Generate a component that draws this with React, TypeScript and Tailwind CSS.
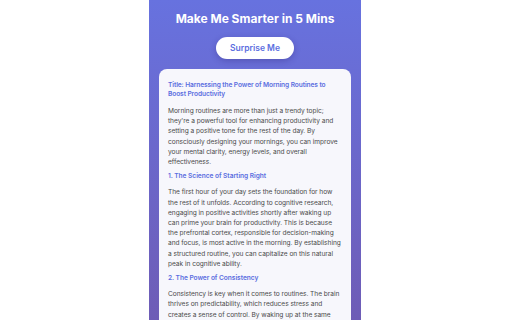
import React from "react";

const sections = [
  {
    heading: "1. The Science of Starting Right",
    body: "The first hour of your day sets the foundation for how the rest of it unfolds. According to cognitive research, engaging in positive activities shortly after waking up can prime your brain for productivity. This is because the prefrontal cortex, responsible for decision-making and focus, is most active in the morning. By establishing a structured routine, you can capitalize on this natural peak in cognitive ability.",
  },
  {
    heading: "2. The Power of Consistency",
    body: "Consistency is key when it comes to routines. The brain thrives on predictability, which reduces stress and creates a sense of control. By waking up at the same time every day, you regulate your body's internal clock and improve the quality of your sleep.",
  },
];

const App: React.FC = () => {
  return (
    <div
      className="w-[512px] h-[320px] bg-white overflow-hidden"
      style={{ fontFamily: "Inter, 'Noto Sans', sans-serif" }}
    >
      <div className="ml-[149px] w-[212px] h-[320px] overflow-hidden bg-gradient-to-b from-[#6772df] to-[#6e5cb6] flex flex-col items-center">
        <h1 className="mt-[11px] text-[12px] leading-[16px] font-bold text-white">
          Make Me Smarter in 5 Mins
        </h1>
        <button className="mt-[10px] shrink-0 px-[14px] py-[6px] rounded-full bg-white text-[#5b6ee0] text-[8.5px] leading-[10px] font-semibold shadow-[0_2px_6px_rgba(40,30,110,0.3)]">
          Surprise Me
        </button>
        <div className="mt-[10px] shrink-0 w-[192px] rounded-[8px] bg-[#f7f7fc] px-[9px] pt-[12px] pb-4 text-[6.6px] leading-[10.2px] text-[#4a4a4a] tracking-[-0.04px]">
          <h2 className="font-semibold text-[#5b6ee0] leading-[8.5px] tracking-[-0.09px]">
            Title: Harnessing the Power of Morning Routines to Boost Productivity
          </h2>
          <p className="mt-[8px]">
            Morning routines are more than just a trendy topic; they're a powerful tool for enhancing productivity and setting a positive tone for the rest of the day. By consciously designing your mornings, you can improve your mental clarity, energy levels, and overall effectiveness.
          </p>
          {sections.map((s) => (
            <div key={s.heading}>
              <h3 className="mt-[4px] font-semibold text-[#5b6ee0]">{s.heading}</h3>
              <p className="mt-[6px]">{s.body}</p>
            </div>
          ))}
        </div>
      </div>
    </div>
  );
};

export default App;
